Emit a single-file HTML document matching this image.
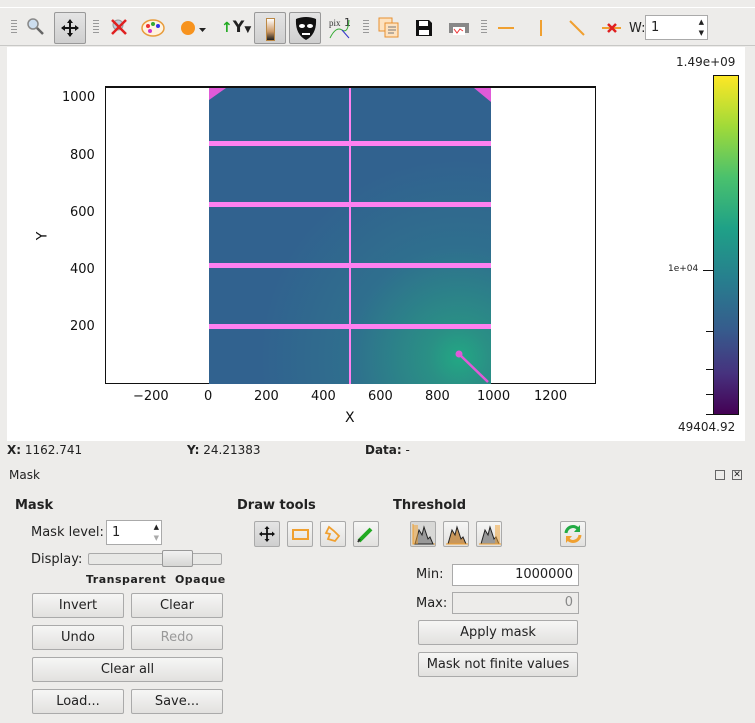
<!DOCTYPE html>
<html><head><meta charset="utf-8"><style>
*{box-sizing:border-box;margin:0;padding:0}
body{width:755px;height:723px;background:#edecea;font-family:"DejaVu Sans","Liberation Sans",sans-serif;font-size:12px;color:#222;position:relative;overflow:hidden}
.a{position:absolute}
.btn{position:absolute;height:25px;border:1px solid #aaa;border-radius:2px;background:linear-gradient(#f6f6f5,#e2e1df);text-align:center;line-height:23px;font-size:13px}
.tb{position:absolute;top:12px;width:32px;height:32px;border:1px solid #999;border-radius:2px;background:linear-gradient(#e4e4e4,#cfcfcf)}
.grip{position:absolute;top:20px;width:6px;height:14px;background:repeating-linear-gradient(#999 0 1px,transparent 1px 3px)}
.tick{font-size:13px;color:#111}
.ib{position:absolute;width:26px;height:26px;border:1px solid #aaa;border-radius:2px;background:linear-gradient(#f6f6f5,#e2e1df)}
.in{position:absolute;background:#fff;border:1px solid #aaa;height:22px;font-size:13px;line-height:20px;padding:0 5px}
b{font-weight:bold}
</style></head><body>
<div class="a" style="left:0;top:7px;width:755px;height:1px;background:#fff"></div>
<div class="grip" style="left:11px"></div>
<svg class="a" style="left:27px;top:18px" width="18" height="18"><circle cx="6" cy="6" r="5" fill="#cde" stroke="#888" stroke-width="1.5"/><line x1="10" y1="10" x2="16" y2="16" stroke="#666" stroke-width="2.5"/></svg>
<div class="tb" style="left:54px"></div>
<svg class="a" style="left:60px;top:18px" width="20" height="20"><path d="M10 2V18M2 10H18" stroke="#111" stroke-width="2"/><path d="M10 1l-3 4h6zM10 19l-3-4h6zM1 10l4-3v6zM19 10l-4-3v6z" fill="#111"/></svg>
<div class="grip" style="left:93px"></div>
<svg class="a" style="left:110px;top:18px" width="18" height="18"><circle cx="8" cy="7" r="5" fill="#bcd" stroke="#999"/><path d="M2 2L16 16M16 2L2 16" stroke="#e02020" stroke-width="2.5"/></svg>
<svg class="a" style="left:141px;top:18px" width="24" height="20"><ellipse cx="12" cy="10" rx="11" ry="8" fill="#fff3e0" stroke="#e89c3c" stroke-width="1.5"/><circle cx="7" cy="8" r="2" fill="#e33"/><circle cx="12" cy="6" r="2" fill="#3a3"/><circle cx="17" cy="8" r="2" fill="#33e"/><circle cx="9" cy="13" r="2" fill="#c3c"/></svg>
<svg class="a" style="left:180px;top:20px" width="28" height="16"><circle cx="8" cy="8" r="7" fill="#f7931e"/><path d="M19 8h7l-3.5 4z" fill="#222"/></svg>
<div class="a" style="left:221px;top:17px;font-size:16px;font-weight:bold;color:#222"><span style="color:#2a2;font-size:14px">↑</span>Y<span style="font-size:9px">▼</span></div>
<div class="tb" style="left:254px"></div>
<div class="a" style="left:266px;top:18px;width:9px;height:23px;background:linear-gradient(#fff,#c96 60%,#222);border:1px solid #b84"></div>
<div class="tb" style="left:289px"></div>
<svg class="a" style="left:294px;top:16px" width="24" height="26"><path d="M2 3Q12 -1 22 3Q23 18 12 24Q1 18 2 3z" fill="#111"/><ellipse cx="8" cy="10" rx="3" ry="2" fill="#fff"/><ellipse cx="16" cy="10" rx="3" ry="2" fill="#fff"/><rect x="8" y="17" width="8" height="2" fill="#fff"/></svg>
<svg class="a" style="left:328px;top:16px" width="24" height="24"><text x="1" y="10" font-size="9" font-family="Liberation Serif" fill="#333">pix</text><text x="16" y="10" font-size="11" fill="#333">1</text><path d="M2 22Q8 10 14 14T21 4" stroke="#3a3" fill="none"/><path d="M14 14L21 22" stroke="#33c" fill="none"/></svg>
<div class="grip" style="left:363px"></div>
<svg class="a" style="left:378px;top:17px" width="22" height="22"><rect x="1" y="1" width="13" height="13" fill="#fde2c0" stroke="#e89030"/><rect x="7" y="6" width="13" height="14" fill="#fde2c0" stroke="#e89030"/><path d="M10 10h8M10 13h8M10 16h6" stroke="#777"/></svg>
<svg class="a" style="left:415px;top:19px" width="18" height="18"><path d="M1 1H14L17 4V17H1z" fill="#111"/><rect x="4" y="2" width="9" height="5" fill="#fff"/><rect x="4" y="11" width="10" height="5" fill="#fff"/></svg>
<svg class="a" style="left:448px;top:19px" width="22" height="18"><rect x="1" y="4" width="20" height="10" fill="#888"/><rect x="5" y="8" width="12" height="8" fill="#fff"/><path d="M6 10l3 4 3-4 3 2" stroke="#e33" fill="none"/></svg>
<div class="grip" style="left:481px"></div>
<div class="a" style="left:498px;top:27px;width:16px;height:2px;background:#f0a030"></div>
<div class="a" style="left:540px;top:20px;width:2px;height:16px;background:#f0a030"></div>
<svg class="a" style="left:568px;top:19px" width="18" height="18"><path d="M2 2L16 16" stroke="#f0a030" stroke-width="2"/></svg>
<svg class="a" style="left:602px;top:20px" width="20" height="16"><path d="M0 8H19" stroke="#f0a030" stroke-width="2"/><path d="M6 4L14 12M14 4L6 12" stroke="#e02020" stroke-width="2.5"/></svg>
<div class="a" style="left:629px;top:21px;font-size:13px">W:</div>
<div class="in" style="left:645px;top:15px;width:63px;height:25px;line-height:23px">1<span style="position:absolute;right:3px;top:-5px;font-size:7px">▲</span><span style="position:absolute;right:3px;top:6px;font-size:7px">▼</span></div>
<div class="a" style="left:0;top:45px;width:755px;height:1px;background:#c8c8c6"></div>

<div class="a" style="left:7px;top:47px;width:738px;height:394px;background:#fff"></div>
<div class="a" style="left:105px;top:86px;width:491px;height:298px;border:1px solid #111;border-top-width:2px"></div>
<div class="a" style="left:209px;top:88px;width:282px;height:296px;background:radial-gradient(circle at 250px 270px,#22a884 0,#2a9085 30px,#2f6f8e 110px,#31628f 200px);"></div>
<svg class="a" style="left:209px;top:88px" width="282" height="296">
<path d="M0 0H17L0 12z" fill="#e05ad8"/><path d="M282 0H265L282 14z" fill="#e05ad8"/>
<rect x="0" y="53" width="282" height="5" fill="#ff80f0"/><rect x="0" y="114" width="282" height="5" fill="#ff80f0"/><rect x="0" y="175" width="282" height="5" fill="#ff80f0"/><rect x="0" y="236" width="282" height="5" fill="#ff80f0"/>
<rect x="140" y="0" width="2" height="296" fill="#ff80f0"/>
<circle cx="250" cy="266" r="3.5" fill="#e05ad8"/><path d="M250 266L279 294" stroke="#e05ad8" stroke-width="2.5"/>
</svg>
<div class="a tick" style="left:133px;top:389px">−200</div>
<div class="a tick" style="left:204px;top:389px">0</div>
<div class="a tick" style="left:254px;top:389px">200</div>
<div class="a tick" style="left:311px;top:389px">400</div>
<div class="a tick" style="left:368px;top:389px">600</div>
<div class="a tick" style="left:425px;top:389px">800</div>
<div class="a tick" style="left:477px;top:389px">1000</div>
<div class="a tick" style="left:534px;top:389px">1200</div>
<div class="a tick" style="left:345px;top:410px;font-size:14px">X</div>
<div class="a tick" style="left:62px;top:90px">1000</div>
<div class="a tick" style="left:70px;top:148px">800</div>
<div class="a tick" style="left:70px;top:205px">600</div>
<div class="a tick" style="left:70px;top:262px">400</div>
<div class="a tick" style="left:70px;top:319px">200</div>
<div class="a tick" style="left:38px;top:228px;font-size:14px;transform:rotate(-90deg)">Y</div>
<div class="a" style="left:676px;top:55px;font-size:12px">1.49e+09</div>
<div class="a" style="left:713px;top:75px;width:26px;height:340px;border:1px solid #111;background:linear-gradient(#fde725,#a0da39 15%,#4ac16d 30%,#1fa187 45%,#277f8e 60%,#365c8d 75%,#46327e 88%,#440154)"></div>
<div class="a" style="left:703px;top:270px;width:10px;height:1px;background:#111"></div>
<div class="a" style="left:668px;top:264px;font-size:9px">1e+04</div>
<div class="a" style="left:706px;top:331px;width:7px;height:1px;background:#111"></div>
<div class="a" style="left:706px;top:369px;width:7px;height:1px;background:#111"></div>
<div class="a" style="left:706px;top:394px;width:7px;height:1px;background:#111"></div>
<div class="a" style="left:706px;top:414px;width:7px;height:1px;background:#111"></div>
<div class="a" style="left:678px;top:420px;font-size:12px">49404.92</div>

<div class="a" style="left:7px;top:443px;font-size:12px"><b>X:</b> 1162.741</div>
<div class="a" style="left:187px;top:443px;font-size:12px"><b>Y:</b> 24.21383</div>
<div class="a" style="left:365px;top:443px;font-size:12px"><b>Data:</b> -</div>
<div class="a" style="left:9px;top:468px;font-size:12px">Mask</div>
<div class="a" style="left:715px;top:470px;width:10px;height:10px;border:1px solid #666"></div>
<div class="a" style="left:732px;top:470px;width:10px;height:10px;border:1px solid #666;font-size:9px;line-height:8px;text-align:center">✕</div>

<div class="a" style="left:15px;top:498px;font-size:13px;font-weight:bold">Mask</div>
<div class="a" style="left:31px;top:525px;font-size:13px">Mask level:</div>
<div class="in" style="left:106px;top:520px;width:56px;height:25px;line-height:23px">1<span style="position:absolute;right:2px;top:-5px;font-size:7px">▲</span><span style="position:absolute;right:2px;top:6px;font-size:7px;color:#aaa">▼</span></div>
<div class="a" style="left:31px;top:552px;font-size:13px">Display:</div>
<div class="a" style="left:88px;top:553px;width:134px;height:12px;border:1px solid #aaa;border-radius:2px;background:#e8e8e6"></div>
<div class="a" style="left:162px;top:550px;width:31px;height:17px;border:1px solid #999;border-radius:2px;background:linear-gradient(#f2f2f2,#d6d6d4)"></div>
<div class="a" style="left:86px;top:573px;font-size:11px;font-weight:bold;letter-spacing:0.5px">Transparent&nbsp; Opaque</div>
<div class="btn" style="left:32px;top:593px;width:92px">Invert</div>
<div class="btn" style="left:131px;top:593px;width:92px">Clear</div>
<div class="btn" style="left:32px;top:625px;width:92px">Undo</div>
<div class="btn" style="left:131px;top:625px;width:92px;color:#999">Redo</div>
<div class="btn" style="left:32px;top:657px;width:191px">Clear all</div>
<div class="btn" style="left:32px;top:689px;width:92px">Load...</div>
<div class="btn" style="left:131px;top:689px;width:92px">Save...</div>

<div class="a" style="left:237px;top:498px;font-size:13px;font-weight:bold">Draw tools</div>
<div class="ib" style="left:254px;top:521px;background:linear-gradient(#e4e4e4,#cfcfcf)"></div>
<svg class="a" style="left:258px;top:525px" width="18" height="18"><path d="M9 2V16M2 9H16" stroke="#111" stroke-width="1.8"/><path d="M9 1l-2.5 3h5zM9 17l-2.5-3h5zM1 9l3-2.5v5zM17 9l-3-2.5v5z" fill="#111"/></svg>
<div class="ib" style="left:287px;top:521px"></div>
<div class="a" style="left:292px;top:529px;width:17px;height:11px;border:2px solid #f0a030"></div>
<div class="ib" style="left:320px;top:521px"></div>
<svg class="a" style="left:323px;top:524px" width="20" height="20"><path d="M6 3L11 7L16 12L12 17L5 15L7 10L3 9z" fill="none" stroke="#f0a030" stroke-width="1.8"/></svg>
<div class="ib" style="left:353px;top:521px"></div>
<svg class="a" style="left:356px;top:524px" width="20" height="20"><path d="M3 17L15 5" stroke="#2a2" stroke-width="4"/><path d="M2 18L4 15" stroke="#333" stroke-width="2"/></svg>

<div class="a" style="left:393px;top:498px;font-size:13px;font-weight:bold">Threshold</div>
<div class="ib" style="left:410px;top:521px;background:#d8d8d6"></div>
<div class="ib" style="left:443px;top:521px"></div>
<div class="ib" style="left:476px;top:521px"></div>
<svg class="a" style="left:411px;top:522px" width="100" height="24">
<path d="M2 2V22H24" fill="none" stroke="#f0a030"/><path d="M4 22L8 8L11 13L13 5L17 17L19 15L22 22z" fill="#999" stroke="#222"/><rect x="2" y="3" width="5" height="19" fill="#f0a030" opacity=".5"/>
<path d="M37 22L41 8L44 13L46 5L50 17L52 15L55 22z" fill="#c8965a" stroke="#222"/><path d="M35 22H57" stroke="#f0a030"/>
<path d="M70 22L74 8L77 13L79 5L83 17L85 15L88 22z" fill="#999" stroke="#222"/><rect x="84" y="3" width="5" height="19" fill="#f0a030" opacity=".5"/><path d="M68 22H90" stroke="#f0a030"/>
</svg>
<div class="ib" style="left:560px;top:521px"></div>
<svg class="a" style="left:563px;top:524px" width="20" height="20"><path d="M3 9A7 7 0 0 1 16 6" fill="none" stroke="#2a4" stroke-width="3"/><path d="M17 1V8H11z" fill="#2a4"/><path d="M17 11A7 7 0 0 1 4 14" fill="none" stroke="#f0a030" stroke-width="3"/><path d="M3 19V12H9z" fill="#f0a030"/></svg>
<div class="a" style="left:416px;top:567px;font-size:13px">Min:</div>
<div class="in" style="left:452px;top:564px;width:127px;text-align:right">1000000</div>
<div class="a" style="left:416px;top:596px;font-size:13px">Max:</div>
<div class="in" style="left:452px;top:592px;width:127px;text-align:right;background:#edecea;color:#888">0</div>
<div class="btn" style="left:418px;top:620px;width:160px">Apply mask</div>
<div class="btn" style="left:418px;top:652px;width:160px">Mask not finite values</div>
</body></html>
